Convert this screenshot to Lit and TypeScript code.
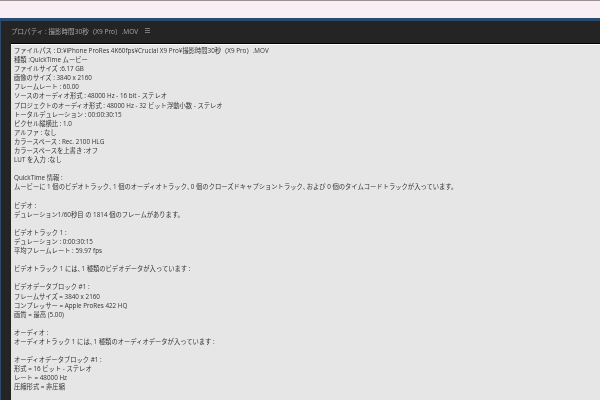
import { LitElement, html, css } from "lit";
import { customElement } from "lit/decorators.js";

const LINES = [
  "ファイルパス : D:¥iPhone ProRes 4K60fps¥Crucial X9 Pro¥撮影時間30秒（X9 Pro）.MOV",
  "種類 :QuickTime ムービー",
  "ファイルサイズ :6.17 GB",
  "画像のサイズ : 3840 x 2160",
  "フレームレート : 60.00",
  "ソースのオーディオ形式 : 48000 Hz - 16 bit - ステレオ",
  "プロジェクトのオーディオ形式 : 48000 Hz - 32 ビット浮動小数 - ステレオ",
  "トータルデュレーション : 00:00:30:15",
  "ピクセル縦横比 : 1.0",
  "アルファ : なし",
  "カラースペース : Rec. 2100 HLG",
  "カラースペースを上書き :オフ",
  "LUT を入力 :なし",
  "",
  "QuickTime 情報 :",
  "ムービーに 1 個のビデオトラック、1 個のオーディオトラック、0 個のクローズドキャプショントラック、および 0 個のタイムコードトラックが入っています。",
  "",
  "ビデオ :",
  "デュレーション1/60秒目 の 1814 個のフレームがあります。",
  "",
  "ビデオトラック 1 :",
  "デュレーション : 0:00:30:15",
  "平均フレームレート : 59.97 fps",
  "",
  "ビデオトラック 1 には、1 種類のビデオデータが入っています :",
  "",
  "ビデオデータブロック #1 :",
  "フレームサイズ = 3840 x 2160",
  "コンプレッサー = Apple ProRes 422 HQ",
  "画質 = 最高 (5.00)",
  "",
  "オーディオ :",
  "オーディオトラック 1 には、1 種類のオーディオデータが入っています :",
  "",
  "オーディオデータブロック #1 :",
  "形式 = 16 ビット - ステレオ",
  "レート = 48000 Hz",
  "圧縮形式 = 非圧縮",
];

@customElement("app-root")
export class AppRoot extends LitElement {
  static styles = css`
    :host {
      display: block;
      width: 600px;
      height: 400px;
      overflow: hidden;
      font-family: "Open Sans", "Noto Sans CJK JP", sans-serif;
      background: #242424;
    }
    .top {
      height: 18px;
      box-sizing: border-box;
      background: #f9eef3;
      border-top: 1px solid #9a9090;
    }
    .panel {
      height: 382px;
      box-sizing: border-box;
      border-top: 3px solid #2a4a6e;
      border-left: 1px solid #2a4a6e;
      display: flex;
      flex-direction: column;
      background: #242424;
    }
    .head {
      height: 23px;
      flex: none;
      display: flex;
      align-items: center;
      gap: 7px;
      padding: 0 0 4px 10px;
      box-sizing: border-box;
      color: #a8a8a8;
      font-size: 6.55px;
      white-space: nowrap;
    }
    .menu {
      display: block;
    }
    .body {
      flex: 1;
      margin-left: 10px;
      border-top: 1px solid #fff;
      box-shadow: 0 -1px 0 #000;
      background: #e6e6e6;
      padding: 1px 0 0 3px;
      color: #333;
      font-size: 6.3px;
      line-height: 9.1px;
    }
    .line {
      height: 9.1px;
      white-space: nowrap;
      filter: blur(0.25px);
    }
    .head span {
      filter: blur(0.25px);
    }
    .comma {
      font-feature-settings: "halt";
      letter-spacing: 0.7px;
    }
  `;

  private renderLine(text: string) {
    const parts = text.split("、");
    return parts.map((part, i) =>
      i === 0 ? part : html`<span class="comma">、</span>${part}`
    );
  }

  render() {
    return html`
      <div class="top"></div>
      <div class="panel">
        <div class="head">
          <span>プロパティ : 撮影時間30秒（X9 Pro）.MOV</span>
          <svg class="menu" width="5" height="6" viewBox="0 0 5 6" aria-hidden="true">
            <path d="M0 .5h5M0 2.5h5M0 4.5h5" stroke="#7a7a7a" stroke-width="1" fill="none" />
          </svg>
        </div>
        <div class="body">
          ${LINES.map((l) => html`<div class="line">${this.renderLine(l)}</div>`)}
        </div>
      </div>
    `;
  }
}
